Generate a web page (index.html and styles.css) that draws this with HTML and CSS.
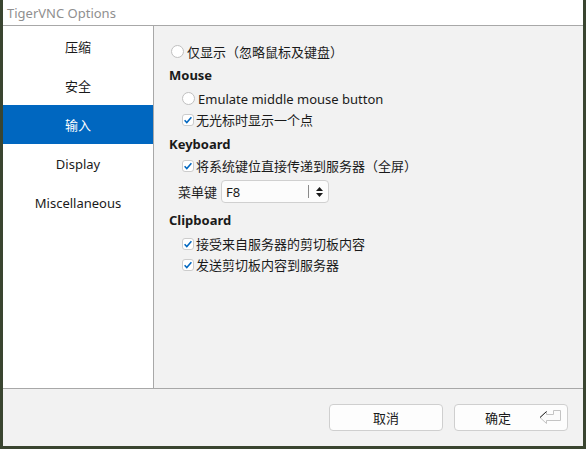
FILE: index.html
```html
<!DOCTYPE html>
<html>
<head>
<meta charset="utf-8">
<link rel="stylesheet" href="styles.css">
</head>
<body>
<div class="window">
  <div class="titlebar">TigerVNC Options</div>
  <div class="main">
    <nav class="sidebar">
      <div class="navitem">压缩</div>
      <div class="navitem">安全</div>
      <div class="navitem selected">输入</div>
      <div class="navitem">Display</div>
      <div class="navitem">Miscellaneous</div>
    </nav>
    <section class="content">
      <div class="row top"><span class="radio"></span><span>仅显示（忽略鼠标及键盘）</span></div>
      <div class="head h-mouse">Mouse</div>
      <div class="row item i-first"><span class="radio"></span><span>Emulate middle mouse button</span></div>
      <div class="row item"><span class="check"><svg viewBox="0 0 12 12" width="12" height="12"><path d="M2.6 6.2 L4.8 8.6 L9.4 3.2" fill="none" stroke="#0067c0" stroke-width="1.5"/></svg></span><span>无光标时显示一个点</span></div>
      <div class="head h-kb">Keyboard</div>
      <div class="row item"><span class="check"><svg viewBox="0 0 12 12" width="12" height="12"><path d="M2.6 6.2 L4.8 8.6 L9.4 3.2" fill="none" stroke="#0067c0" stroke-width="1.5"/></svg></span><span>将系统键位直接传递到服务器（全屏）</span></div>
      <div class="menurow">
        <span class="menulabel">菜单键</span>
        <div class="select">
          <span class="selval">F8</span>
          <span class="seldiv"></span>
          <svg class="arrows" viewBox="0 0 9 12" width="9" height="12"><path d="M4.5 1 L8 5 L1 5 Z M1 7 L8 7 L4.5 11 Z" fill="#1a1a1a"/></svg>
        </div>
      </div>
      <div class="head h-clip">Clipboard</div>
      <div class="row item i-clip"><span class="check"><svg viewBox="0 0 12 12" width="12" height="12"><path d="M2.6 6.2 L4.8 8.6 L9.4 3.2" fill="none" stroke="#0067c0" stroke-width="1.5"/></svg></span><span>接受来自服务器的剪切板内容</span></div>
      <div class="row item"><span class="check"><svg viewBox="0 0 12 12" width="12" height="12"><path d="M2.6 6.2 L4.8 8.6 L9.4 3.2" fill="none" stroke="#0067c0" stroke-width="1.5"/></svg></span><span>发送剪切板内容到服务器</span></div>
    </section>
  </div>
  <div class="footer">
    <button class="btn">取消</button>
    <button class="btn ok">确定
      <svg class="enter" viewBox="0 0 24 15" width="24" height="15"><path d="M1 7.5 L7.5 1.5 L7.5 4.5 L14.5 4.5 L14.5 0.5 L21.5 0.5 L21.5 10.5 L7.5 10.5 L7.5 13.5 Z" fill="#fbfbfb" stroke="#c4c4c4" stroke-width="1"/><path d="M1 7.5 L7.5 1.5" stroke="#222" stroke-width="1"/></svg>
    </button>
  </div>
</div>
</body>
</html>
```

FILE: styles.css
```css
html, body {
  margin: 0;
  padding: 0;
}
body {
  width: 586px;
  height: 449px;
  overflow: hidden;
  background: #3a4530;
  font-family: "Noto Sans", "Noto Sans CJK SC", sans-serif;
  font-size: 13px;
  color: #1a1a1a;
}
.window {
  margin-left: 3px;
  width: 580px;
  height: 446px;
  display: flex;
  flex-direction: column;
  background: #f2f2f2;
}
.titlebar {
  height: 25px;
  border-bottom: 1px solid #a8a8a8;
  background: #ffffff;
  color: #8f8f8f;
  font-size: 13px;
  line-height: 26px;
  padding-left: 4px;
}
.main {
  height: 362px;
  display: flex;
  border-bottom: 1px solid #a8a8a8;
}
.sidebar {
  width: 150px;
  background: #ffffff;
  border-right: 1px solid #a8a8a8;
  padding-top: 1px;
  display: flex;
  flex-direction: column;
}
.navitem {
  height: 39px;
  display: flex;
  align-items: center;
  justify-content: center;
}
.navitem.selected {
  background: #0067c0;
  color: #ffffff;
}
.content {
  flex: 1;
  display: flex;
  flex-direction: column;
  padding-left: 15px;
  padding-top: 15px;
}
.row {
  height: 21px;
  display: flex;
  align-items: center;
}
.row.top {
  padding-left: 2px;
}
.row.item {
  padding-left: 13px;
}
.head {
  height: 22px;
  display: flex;
  align-items: center;
  font-weight: bold;
}
.h-mouse { margin-top: 2px; }
.i-first { margin-top: 2px; }
.h-kb { margin-top: 3px; }
.h-clip { margin-top: 6px; }
.i-clip { margin-top: 2px; }
.radio {
  width: 11px;
  height: 11px;
  border: 1px solid #c0c0c0;
  border-radius: 50%;
  background: #ffffff;
  margin-right: 3px;
  flex: none;
}
.check {
  width: 12px;
  height: 12px;
  box-sizing: border-box;
  border: 1px solid #cccccc;
  border-radius: 3px;
  background: #ffffff;
  margin-right: 2px;
  flex: none;
  display: flex;
  align-items: center;
  justify-content: center;
}
.check svg {
  flex: none;
}
.menurow {
  margin-top: 4px;
  height: 23px;
  display: flex;
  align-items: center;
  padding-left: 9px;
}
.menulabel {
  width: 43px;
}
.select {
  width: 108px;
  height: 23px;
  box-sizing: border-box;
  border: 1px solid #d0d0d0;
  border-radius: 4px;
  background: #fcfcfc;
  display: flex;
  align-items: center;
  padding-left: 4px;
}
.selval {
  width: 82px;
}
.seldiv {
  width: 1px;
  height: 13px;
  background: #8a8a8a;
  margin-right: 6px;
}
.arrows {
  flex: none;
}
.footer {
  flex: 1;
  display: flex;
  justify-content: flex-end;
  align-items: flex-start;
  gap: 11px;
  padding-top: 15px;
  padding-right: 15px;
}
.btn {
  width: 114px;
  height: 27px;
  border: 1px solid #cfcfcf;
  border-radius: 4px;
  background: #fdfdfd;
  font-family: "Noto Sans", "Noto Sans CJK SC", sans-serif;
  font-size: 13px;
  color: #1a1a1a;
  padding: 0;
  position: relative;
}
.btn.ok {
  padding-right: 26px;
}
.enter {
  position: absolute;
  right: 4px;
  top: 5px;
}
```
